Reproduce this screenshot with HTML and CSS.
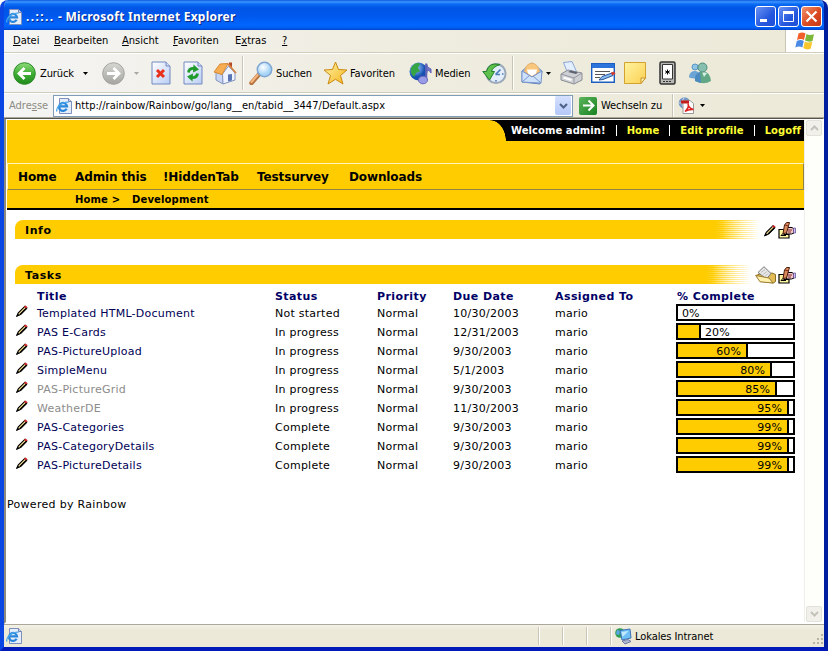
FILE: index.html
```html
<!DOCTYPE html>
<html lang="de">
<head>
<meta charset="utf-8">
<title>..::.. - Microsoft Internet Explorer</title>
<link rel="stylesheet" href="styles.css">
</head>
<body>
<svg class="defs" width="0" height="0" aria-hidden="true">
  <defs>
    <linearGradient id="green" x2="0" y2="1"><stop stop-color="#8fdc7c"/><stop offset=".5" stop-color="#3fae34"/><stop offset="1" stop-color="#1f8a1c"/></linearGradient>
    <linearGradient id="grey" x2="0" y2="1"><stop stop-color="#d6d6d2"/><stop offset="1" stop-color="#a4a4a0"/></linearGradient>
    <linearGradient id="sheet" x2="1" y2="1"><stop stop-color="#fff"/><stop offset="1" stop-color="#b9cdf4"/></linearGradient>
    <linearGradient id="gold" x2="1" y2="1"><stop stop-color="#fff6a8"/><stop offset="1" stop-color="#f4b21c"/></linearGradient>
    <linearGradient id="note" x2="1" y2="1"><stop stop-color="#fff3a0"/><stop offset="1" stop-color="#fbd052"/></linearGradient>
    <radialGradient id="glass" cx=".4" cy=".35"><stop stop-color="#fff"/><stop offset="1" stop-color="#a6d4f6"/></radialGradient>
    <radialGradient id="globe" cx=".35" cy=".3"><stop stop-color="#a9d2ff"/><stop offset="1" stop-color="#1550b0"/></radialGradient>
    <symbol id="ie" viewBox="0 0 16 16">
      <path d="M3.500.5h9l3 3v12h-12z" fill="#e6eefc" stroke="#7d8fbd"/><path d="M12.500.5v3h3" fill="#c4d2ee" stroke="#6f83b4"/>
      <path d="M10.600 10.800A4 4 0 1 1 11 8.300H3.400" fill="none" stroke="#2a86d8" stroke-width="2.200"/>
      <path d="M.9 13.500C-.5 9.500 6 3.500 12.500 4.300" fill="none" stroke="#4aa6ea" stroke-width="1.300"/>
    </symbol>
    <symbol id="pencil" viewBox="0 0 12 12">
      <path d="M1 11l1.300-3.200L9 1.200l1.800 1.700L4.300 9.500z" fill="#e9d28a" stroke="#000" stroke-width="1.100"/>
      <path d="M8 1.800L9.500.4l2.100 1.900-1.500 1.500z" fill="#d42a2a"/><path d="M.2 11.800l1.200-3.300 2.200 2z"/><path d="M4.300 9.500l6.300-6.200" stroke="#000" stroke-width="1.400"/>
    </symbol>
    <symbol id="props" viewBox="0 0 18 17">
      <path d="M1 7.500h5v5h5v3.500H1z" fill="#fff6a0" stroke="#000" stroke-width="1.200"/>
      <path d="M3 13.500l3-3M3 13.500h5" stroke="#000" fill="none"/>
      <path d="M9 5.500h5l2 1.500v4L13.500 12H9l-2-2z" fill="#f3c4c8" stroke="#000"/>
      <path d="M15.500 6h2v5h-2z" fill="#d2bdf5" stroke="#54468a" stroke-width=".7"/>
      <path d="M5 11.500L6.500 3l2-2.500h3L10.500 4 8.500 11z" fill="#d98a58" stroke="#4b1c0c"/>
      <path d="M7 3l3.500 1M10 8h4M10 10h3" stroke="#7a2c24" fill="none"/>
    </symbol>
    <symbol id="folder" viewBox="0 0 22 18">
      <path d="M1 9.500l5-2 4 1 7-1.500 3.500 1.500v7l-2 1.500L6 15.500z" fill="#e2bd55" stroke="#8c6d24"/>
      <path d="M3 6.500L9 .7l7 6.800L11.500 13z" fill="#e8e8e8" stroke="#777"/><path d="M6 6.500l4-3M8 8.500l4-3M10 10.500l3-3" stroke="#bbb"/>
      <path d="M.7 9.500L14 12l4 5-13-1.200z" fill="#fff0ae" stroke="#9b7c30"/>
    </symbol>
    <symbol id="down" viewBox="0 0 5 3"><path d="M0 0h5L2.500 3z"/></symbol>
  </defs>
</svg>
<div class="window">
  <header class="titlebar">
    <svg class="i16"><use href="#ie"/></svg>
    <h1><span class="dots">..::..</span> - Microsoft Internet Explorer</h1>
    <div class="winbtns">
      <span class="wb"><svg viewBox="0 0 21 21"><path d="M5 13h7v3H5z" fill="#fff"/></svg></span>
      <span class="wb"><svg viewBox="0 0 21 21"><path d="M5.500 5.500h10v10h-10z" fill="none" stroke="#fff"/><path d="M5 5h11v3H5z" fill="#fff"/></svg></span>
      <span class="wb close"><svg viewBox="0 0 21 21"><path d="M5.500 5.500l10 10m0-10l-10 10" stroke="#fff" stroke-width="2.200"/></svg></span>
    </div>
  </header>
  <div class="chrome">
    <nav class="menubar">
      <span><u>D</u>atei</span><span><u>B</u>earbeiten</span><span><u>A</u>nsicht</span><span><u>F</u>avoriten</span><span>E<u>x</u>tras</span><span><u>?</u></span>
      <div class="flag"><svg width="20" height="18" viewBox="0 0 20 18"><path d="M3.500 1.500q4-2 7 0L9 8q-3-2-7 0z" fill="#f0602a"/><path d="M11.500 2q3 2 7.500.3L17.500 9q-4 1.500-7.500-.5z" fill="#7cb83a"/><path d="M1.800 9q4-2 7 0l-1.500 6.500q-3-2-7 0z" fill="#4a8ae6"/><path d="M9.800 9.500q3 2 7.500.3L15.800 16.500q-4 2-7.500-.5z" fill="#f8c62c"/></svg></div>
    </nav>
    <div class="toolbar">
      <svg width="23" height="23" viewBox="0 0 23 23"><circle cx="11.500" cy="11.500" r="10.800" fill="url(#green)" stroke="#2c8a28"/><path d="M18 11.500H6M11.500 6L6 11.500l5.500 5.500" fill="none" stroke="#fff" stroke-width="2.800"/></svg>
      <span>Zurück</span><svg class="arr"><use href="#down"/></svg>
      <svg width="23" height="23" viewBox="0 0 23 23"><circle cx="11.500" cy="11.500" r="10.800" fill="url(#grey)" stroke="#a5a5a0"/><path d="M5 11.500h12M11.500 6l5.500 5.500-5.500 5.500" fill="none" stroke="#fff" stroke-width="2.800"/></svg>
      <svg class="arr off"><use href="#down"/></svg>
      <svg width="20" height="24" viewBox="0 0 20 24"><path d="M1 1h14l4 4v18H1z" fill="url(#sheet)" stroke="#7389c0"/><path d="M15 1v4h4" fill="#cfdcf8" stroke="#7389c0"/><path d="M6 9l7 7m0-7l-7 7" stroke="#e8301a" stroke-width="3"/></svg>
      <svg width="20" height="24" viewBox="0 0 20 24"><path d="M1 1h14l4 4v18H1z" fill="url(#sheet)" stroke="#7389c0"/><path d="M15 1v4h4" fill="#cfdcf8" stroke="#7389c0"/><path d="M5.500 11.500q.5-4.500 6-4M14.500 12.500q-.5 4.500-6 4" fill="none" stroke="#1f9a2c" stroke-width="2.800"/><path d="M10.500 3.500l5.500 5-6 3zM9.500 20.500l-5.500-5 6-3z" fill="#1f9a2c"/></svg>
      <svg width="24" height="24" viewBox="0 0 24 24"><path d="M16 1.500h3V8h-3z" fill="#b54a28"/><path d="M3 11l7 3v9l-7-4z" fill="#c9d6f3" stroke="#8494bf"/><path d="M9.500 13l6-8 6.500 7v7l-12 4z" fill="#eef3ff" stroke="#8494bf"/><path d="M1 11L7 3l8-.5L9 13.500z" fill="#f7ad52" stroke="#d88a34"/><path d="M15 3l8 9" stroke="#d98440" stroke-width="1.800"/><path d="M15 13.500l4-.5v6.500l-4 1z" fill="#5975b5"/></svg>
      <i class="sep"></i>
      <svg width="25" height="24" viewBox="0 0 25 24"><path d="M2.500 22l7-8" stroke="#b87440" stroke-width="4.500" stroke-linecap="round"/><path d="M2.500 21l6-7" stroke="#f5b680" stroke-width="2.200" stroke-linecap="round"/><circle cx="15.500" cy="8.500" r="7.200" fill="url(#glass)" stroke="#7fa5d2" stroke-width="1.500"/></svg>
      <span>Suchen</span>
      <svg width="25" height="24" viewBox="0 0 25 24"><path d="M12.500 1l3 7.500 8.500.5-6.500 5.500 2.500 8.500-7.500-4.700L5 23l2.500-8.500L1 9l8.500-.5z" fill="url(#gold)" stroke="#c98a12"/></svg>
      <span>Favoriten</span>
      <svg width="24" height="24" viewBox="0 0 24 24"><circle cx="9.500" cy="10.500" r="9" fill="url(#globe)"/><path d="M2 7q5-7 9-4l-2 4 2 3-4 2-2 4q-4-3-3-9z" fill="#35a544"/><path d="M17.500 3q.5 4 4.500 5v4q-1-3-4.500-3z" fill="#7778c8" stroke="#6061b8"/><path d="M17.200 2.500V19" stroke="#6061b8" stroke-width="2.200"/><ellipse cx="14" cy="19" rx="4.500" ry="3.800" fill="#9a9be6" stroke="#6566bc"/></svg>
      <span>Medien</span>
      <svg width="25" height="23" viewBox="0 0 25 23"><circle cx="14" cy="11.500" r="9.600" fill="#e3eefa" stroke="#9aa8b8" stroke-width="2"/><path d="M13.500 12.500l5-5M13.500 12.500H18M14 18v1.500M21.500 12H20" stroke="#4a7cba" stroke-width="1.600"/><path d="M18 2.500Q6.500 0 4.500 9.500H.8L7.500 18l5-8.500H9.500q1-4.500 8.500-7z" fill="#5fc04c" stroke="#23802a"/></svg>
      <i class="sep"></i>
      <svg width="22" height="24" viewBox="0 0 22 24"><path d="M1 10l10-8 10 8-2 13L1 21z" fill="#9dc0ee" stroke="#6684bd"/><path d="M3.500 10.500q1-7.500 7.500-8.500 6 1 7.500 8.500l-7.500 5z" fill="#f8c77c" stroke="#e0b070"/><path d="M6 8.500h10l-1 4-4 2.500-4-2.500z" fill="#fff"/><path d="M1 10l10 6 10-6-1 12-19-1z" fill="#cfe2fc" stroke="#7a96ca"/><path d="M1 21l8-7M20 22l-8-7" stroke="#7a96ca"/></svg>
      <svg class="arr"><use href="#down"/></svg>
      <svg width="24" height="24" viewBox="0 0 24 24"><path d="M3.500 1.500l8.500-1 4.500 10-8.500 2.500z" fill="#e3eeff" stroke="#8ba6d6"/><path d="M1 13l7-4 14 3v7l-8 4-13-4z" fill="#cfd0d4" stroke="#8a8d96"/><path d="M1 13l13 4 8-5M14 17v6" fill="none" stroke="#9699a2"/><path d="M8 11l8 2 2-1.500-7-2z" fill="#5c626e"/><path d="M3.500 16.500l8 2.500" stroke="#fff" stroke-width="2"/></svg>
      <svg width="25" height="20" viewBox="0 0 25 20"><path d="M.7.7h22.600v18.600H.7z" fill="#fff" stroke="#1d5fc0" stroke-width="1.400"/><path d="M1 1h22v4H1z" fill="#2c74dc"/><path d="M4 8.500h15M4 11.500h10M4 14.500h5" stroke="#555"/><path d="M8 17l3-3.500 10-3.500 1 2.500-10 4z" fill="#86bbef" stroke="#2b5597"/><path d="M20 9.500l3-1 1.500 2.500-3.500 1.200z" fill="#d83a2c"/></svg>
      <svg width="23" height="22" viewBox="0 0 23 22"><path d="M.5.500h21V16l-4.500 5.500H.5z" fill="url(#note)" stroke="#d3a32e"/><path d="M21.500 16H17v5.500z" fill="#fff3b0" stroke="#c6922a"/></svg>
      <svg width="17" height="24" viewBox="0 0 17 24"><rect x="1" y="1" width="15" height="22" rx="1.500" fill="#b8b8b4" stroke="#333" stroke-width="1.500"/><path d="M3.500 3.500h10V18h-10z" fill="#fff" stroke="#333"/><path d="M8.500 8.500v5M6.200 9.800l4.600 2.500M10.800 9.800l-4.600 2.500" stroke="#000"/><path d="M4 20.500h9" stroke="#333" stroke-dasharray="2 1"/></svg>
      <svg width="24" height="22" viewBox="0 0 24 22"><circle cx="7" cy="5" r="3" fill="#8fc4e4" stroke="#5a94c0"/><path d="M1 15.500Q1 9.500 6.500 9t6 6.500q-6 2-11.500 0z" fill="#6ba4d4"/><path d="M7 19q1-9.500 8-9.500t8 9.500q-7 4.500-16 0z" fill="#62a886"/><path d="M7 19q-1-7 5-9l1 11z" fill="#4a8ac0"/><path d="M14 10l2 5 3-4z" fill="#d6efe4"/><circle cx="14.500" cy="5.500" r="4.500" fill="#86bfae" stroke="#4d8c7c"/></svg>
    </div>
    <div class="address">
      <label>Adre<u>s</u>se</label>
      <div class="field"><svg class="i16"><use href="#ie"/></svg><span>http://rainbow/Rainbow/go/lang__en/tabid__3447/Default.aspx</span><b class="drop"><svg width="9" height="6" viewBox="0 0 9 6"><path d="M1 1l3.500 3.500L8 1" fill="none" stroke="#4d6185" stroke-width="2"/></svg></b></div>
      <b class="go"><svg width="17" height="17" viewBox="0 0 17 17"><path d="M3 8.500h10M8.500 3.500l5 5-5 5" fill="none" stroke="#fff" stroke-width="2"/></svg></b>
      <span class="golabel">Wechseln zu</span>
      <i class="sep"></i>
      <svg class="pdf" width="18" height="17" viewBox="0 0 18 17"><circle cx="6.500" cy="6" r="5.800" fill="#7797c4"/><path d="M1 6h11M6.500 0q-5 6 0 12" stroke="#c8d8ee" fill="none"/><path d="M5 3.500h7l3.500 3v10H5z" fill="#fff" stroke="#999"/><path d="M3 3.500h8v3H3z" fill="#c41c1c"/><path d="M7 14.500q4.500-4 3-8 0 4.500 5.500 6-5-.5-8.500 2z" fill="none" stroke="#d22" stroke-width="1.500"/></svg>
      <svg class="arr"><use href="#down"/></svg>
    </div>
  </div>
  <div class="view">
    <main class="page">
      <div class="banner">
        <div class="top"><div class="user"><b>Welcome admin!</b><i></i><a>Home</a><i></i><a>Edit profile</a><i></i><a>Logoff</a></div></div>
        <nav class="tabs"><a>Home</a><a>Admin this</a><a>!HiddenTab</a><a>Testsurvey</a><a>Downloads</a></nav>
        <div class="crumbs"><span>Home &gt;</span><span>Development</span></div>
      </div>
      <section class="info"><div class="bar"><h2>Info</h2></div><svg class="edit" width="12" height="13"><use href="#pencil"/></svg><svg width="18" height="17"><use href="#props"/></svg></section>
      <section class="taskhead"><div class="bar"><h2>Tasks</h2></div><svg class="edit" width="22" height="18"><use href="#folder"/></svg><svg width="18" height="17"><use href="#props"/></svg></section>
      <div class="tasks">
        <div class="row head"><span></span><span>Title</span><span>Status</span><span>Priority</span><span>Due Date</span><span>Assigned To</span><span>% Complete</span></div>
        <div class="row"><svg><use href="#pencil"/></svg><a>Templated HTML-Document</a><span>Not started</span><span>Normal</span><span>10/30/2003</span><span>mario</span><div class="meter"><em>0%</em></div></div>
        <div class="row"><svg><use href="#pencil"/></svg><a>PAS E-Cards</a><span>In progress</span><span>Normal</span><span>12/31/2003</span><span>mario</span><div class="meter"><i style="width:23px"></i><em>20%</em></div></div>
        <div class="row"><svg><use href="#pencil"/></svg><a>PAS-PictureUpload</a><span>In progress</span><span>Normal</span><span>9/30/2003</span><span>mario</span><div class="meter"><i style="width:70px">60%</i></div></div>
        <div class="row"><svg><use href="#pencil"/></svg><a>SimpleMenu</a><span>In progress</span><span>Normal</span><span>5/1/2003</span><span>mario</span><div class="meter"><i style="width:94px">80%</i></div></div>
        <div class="row"><svg><use href="#pencil"/></svg><a class="dim">PAS-PictureGrid</a><span>In progress</span><span>Normal</span><span>9/30/2003</span><span>mario</span><div class="meter"><i style="width:99px">85%</i></div></div>
        <div class="row"><svg><use href="#pencil"/></svg><a class="dim">WeatherDE</a><span>In progress</span><span>Normal</span><span>11/30/2003</span><span>mario</span><div class="meter"><i style="width:111px">95%</i></div></div>
        <div class="row"><svg><use href="#pencil"/></svg><a>PAS-Categories</a><span>Complete</span><span>Normal</span><span>9/30/2003</span><span>mario</span><div class="meter"><i style="width:111px">99%</i></div></div>
        <div class="row"><svg><use href="#pencil"/></svg><a>PAS-CategoryDetails</a><span>Complete</span><span>Normal</span><span>9/30/2003</span><span>mario</span><div class="meter"><i style="width:111px">99%</i></div></div>
        <div class="row"><svg><use href="#pencil"/></svg><a>PAS-PictureDetails</a><span>Complete</span><span>Normal</span><span>9/30/2003</span><span>mario</span><div class="meter"><i style="width:111px">99%</i></div></div>
      </div>
      <footer>Powered by Rainbow</footer>
    </main>
    <div class="scroll"><b><svg width="9" height="6" viewBox="0 0 9 6"><path d="M1 5l3.500-3.500L8 5" fill="none" stroke="#c4c3ba" stroke-width="2"/></svg></b><b><svg width="9" height="6" viewBox="0 0 9 6"><path d="M1 1l3.500 3.500L8 1" fill="none" stroke="#c4c3ba" stroke-width="2"/></svg></b></div>
  </div>
  <div class="status">
    <svg class="i16"><use href="#ie"/></svg>
    <i></i><i></i><i></i><i></i>
    <svg class="zone" width="17" height="17" viewBox="0 0 17 17"><circle cx="5" cy="5" r="4.800" fill="#2f9e54"/><path d="M2 2l3 1-1 4-3-1z" fill="#5ba6ea"/><path d="M5 2.500l10-1.500 1 9-9 2z" fill="#6fc0f6" stroke="#3c70b4"/><path d="M6.500 4l7-1-6 6z" fill="#c3e9ff"/><path d="M7 13l6-1.500 3 2-6 2.500z" fill="#aeb6d0" stroke="#6c7aa4"/></svg>
    <span>Lokales Intranet</span>
    <svg class="grip" width="12" height="12" viewBox="0 0 12 12"><path d="M9 1h2v2H9zM5 5h2v2H5zM9 5h2v2H9zM1 9h2v2H1zM5 9h2v2H5zM9 9h2v2H9z" fill="#b8b4a2"/></svg>
  </div>
</div>
</body>
</html>
```
FILE: styles.css
```css
* { box-sizing: border-box; }
body { margin: 0; background: #fff; font: 11px/14px "DejaVu Sans Condensed", "DejaVu Sans", Tahoma, sans-serif; color: #000; white-space: nowrap; }
.defs { position: absolute; }
svg { display: block; flex: none; }
.i16 { width: 16px; height: 16px; }
.arr { width: 5px; height: 3px; }
.off { opacity: .3; }

.window { width: 828px; height: 651px; display: flex; flex-direction: column; border: solid #0a3cd8; border-width: 0 4px 4px; border-color: #0831d9 #001ea0 #0019b8 #0a46e4; border-radius: 8px 8px 0 0; overflow: hidden; background: #ece9d8; }
.titlebar { height: 30px; margin: 0 -4px; padding: 3px 6px 0 6px; display: flex; align-items: center; background: linear-gradient(#0a5be0, #3d95ff 2px, #0a6cf5 4px, #0055e5 8px, #0058ee 16px, #0066ff 25px, #005cf0 28px, #0042c8); }
.titlebar h1 { margin: 0 0 0 4px; flex: 1; font: bold 12px/16px "Noto Sans", "Open Sans", sans-serif; letter-spacing: .24px; color: #fff; text-shadow: 1px 1px #0a2a88; }
.dots { letter-spacing: 1.4px; }
.winbtns { display: flex; gap: 2px; }
.wb { width: 21px; height: 21px; border: 1px solid #fff; border-radius: 3px; background: linear-gradient(135deg, #6a93f5, #2558dd 60%, #1e4fd8); }
.wb svg { margin: -1px; width: 21px; height: 21px; }
.close { background: linear-gradient(135deg, #f0936f, #dc4a20 55%, #c8391a); }

.chrome { height: 88px; background: linear-gradient(90deg, #f4f4f4, #efede0 45%, #ece9d8); }
.menubar { height: 23px; display: grid; grid-template-columns: 41px 68px 51px 62px 47px 1fr 39px; padding-left: 9px; align-items: center; border-bottom: 1px solid #d0cdbd; }
.flag { height: 22px; background: #fff; border-left: 1px solid #c8c5b5; display: grid; place-items: center; }
.toolbar { height: 40px; border-top: 1px solid #fff; border-bottom: 1px solid #cfccbc; display: grid; align-items: center; padding-left: 9px; grid-template-columns: 27px 43px 19px 32px 17px 32px 30px 29px 7px 27px 47px 27px 59px 26px 47px 30px 9px 25px 14px 31px 33px 35px 29px 24px; }
.toolbar span { letter-spacing: -.1px; padding-top: 1px; }
.sep { width: 2px; height: 34px; border-left: 1px solid #c8c5b5; border-right: 1px solid #fff; }
.address { height: 25px; border-top: 1px solid #fff; border-bottom: 1px solid #aca899; display: flex; align-items: center; padding-left: 5px; }
.address label { width: 44px; color: #8c8b83; }
.field { width: 520px; height: 22px; background: #fff; border: 1px solid #7f9db9; display: flex; align-items: center; padding-left: 2px; gap: 3px; }
.field span { flex: 1; letter-spacing: .04px; }
.drop { width: 16px; height: 19px; margin-right: 1px; background: linear-gradient(#d5e0fe, #b4c8f8); border-radius: 2px; display: grid; place-items: center; }
.go { width: 18px; height: 18px; margin-left: 6px; background: linear-gradient(135deg, #5cb45c, #17821f); border-radius: 2px; display: grid; place-items: center; }
.golabel { width: 71px; margin-left: 4px; letter-spacing: -.06px; }
.address .sep { height: 23px; }
.pdf { margin: 0 4px; }

.view { height: 506px; border: solid #fff; border-width: 1px 1px 2px 2px; border-left-color: #8c8a7e; border-top-color: #55534a; display: flex; background: #fff; }
.page { width: 798px; padding: 1px 0 0 1px; font: 11px/14px "DejaVu Sans", Verdana, sans-serif; }
.banner { height: 90px; background: #fc0; border-bottom: 2px solid #000; font-weight: bold; }
.top { height: 43px; display: flex; justify-content: flex-end; }
.user { height: 21px; width: 314px; padding-left: 21px; display: flex; align-items: center; background: radial-gradient(ellipse 16px 21px at 0 100%, #fc0 97%, #000); color: #fff; font-size: 10px; letter-spacing: .06px; }
.user i { width: 1px; height: 11px; background: #fff; margin: 0 10px; }
.user a { color: #ff3; }
.tabs { height: 27px; border: 1px solid #fff3b8; border-bottom-color: #948444; border-right-color: #948444; display: grid; grid-template-columns: 57px 88px 94px 92px 1fr; align-items: center; padding-left: 10px; font-size: 12px; letter-spacing: -.12px; }
.crumbs { height: 18px; padding: 2px 0 0 68px; display: grid; grid-template-columns: 57px 1fr; align-items: center; font-size: 10px; letter-spacing: .15px; }
.info, .taskhead { height: 20px; margin: 10px 8px 0; display: flex; align-items: center; justify-content: flex-end; }
.taskhead { margin-top: 25px; }
.bar { height: 19px; width: 745px; margin-right: auto; align-self: flex-start; padding-left: 10px; border-radius: 8px 0 0 0; display: flex; justify-content: space-between; background: linear-gradient(90deg, #fc0 calc(100% - 38px), #fff); }
.bar::after { content: ""; width: 45px; background: repeating-linear-gradient(transparent 0 1px, #fff 1px 2px); mask-image: linear-gradient(90deg, transparent, #000 75%); }
.taskhead .bar { width: 736px; }
.bar h2 { margin: 0; font: bold 11px/21px "DejaVu Sans", Verdana, sans-serif; letter-spacing: .6px; }
.edit { margin-right: 2px; }
.taskhead .edit { margin-right: 1px; }
.row { height: 19px; display: grid; grid-template-columns: 21px 238px 102px 76px 102px 121px 119px; padding-left: 9px; line-height: 19px; letter-spacing: .25px; }
.row.head { line-height: 23px; color: #000066; font-weight: bold; letter-spacing: .42px; }
.row.head span:last-child { padding-left: 1px; }
.row svg { width: 12px; height: 12px; margin-top: 1px; }
.row a { color: #000055; }
.row .dim { color: #8c8c8c; }
.meter { height: 17px; border: 2px solid #000; display: flex; line-height: 15px; letter-spacing: .1px; }
.meter i { background: #fc0; border-right: 2px solid #000; padding-right: 5px; text-align: right; font-style: normal; }
.meter em { font-style: normal; padding-left: 4px; }
.tasks { margin-bottom: 23px; }
footer { letter-spacing: .3px; }
.scroll { flex: 1; border-left: 1px solid #f0f0ea; padding: 1px 1px 0; background: #fefefb; display: flex; flex-direction: column; justify-content: space-between; }
.scroll b { width: 16px; height: 16px; background: #f1f0ea; border: 1px solid #e2e1da; border-radius: 2px; display: grid; place-items: center; }
.status { height: 23px; display: flex; align-items: center; padding-left: 2px; border-top: 1px solid #aca899; background: linear-gradient(#f4f2e8, #ece9d8 5px); }
.status i { width: 24px; height: 18px; border-left: 1px solid #c9c6b6; box-shadow: inset 1px 0 #fff; }
.status .i16 { margin-right: 516px; }
.status i:nth-of-type(4) { width: 5px; }
.status span { padding-top: 2px; letter-spacing: -.08px; }
.zone { margin-right: 3px; }
.grip { margin: 6px 0 0 auto; }
```
